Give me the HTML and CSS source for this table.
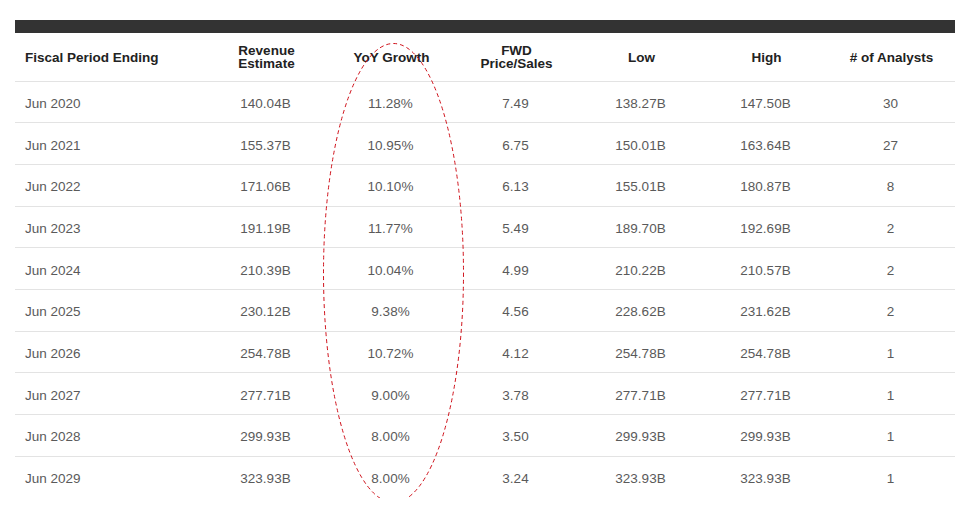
FILE: index.html
```html
<!DOCTYPE html>
<html>
<head>
<meta charset="utf-8">
<link rel="stylesheet" href="styles.css">
</head>
<body>
<div class="wrap">
  <div class="topbar"></div>
  <table class="est">
    <thead>
      <tr>
        <th class="first">Fiscal Period Ending</th>
        <th>Revenue<br>Estimate</th>
        <th>YoY Growth</th>
        <th>FWD<br>Price/Sales</th>
        <th>Low</th>
        <th>High</th>
        <th># of Analysts</th>
      </tr>
    </thead>
    <tbody>
      <tr><td class="first">Jun 2020</td><td>140.04B</td><td>11.28%</td><td>7.49</td><td>138.27B</td><td>147.50B</td><td>30</td></tr>
      <tr><td class="first">Jun 2021</td><td>155.37B</td><td>10.95%</td><td>6.75</td><td>150.01B</td><td>163.64B</td><td>27</td></tr>
      <tr><td class="first">Jun 2022</td><td>171.06B</td><td>10.10%</td><td>6.13</td><td>155.01B</td><td>180.87B</td><td>8</td></tr>
      <tr><td class="first">Jun 2023</td><td>191.19B</td><td>11.77%</td><td>5.49</td><td>189.70B</td><td>192.69B</td><td>2</td></tr>
      <tr><td class="first">Jun 2024</td><td>210.39B</td><td>10.04%</td><td>4.99</td><td>210.22B</td><td>210.57B</td><td>2</td></tr>
      <tr><td class="first">Jun 2025</td><td>230.12B</td><td>9.38%</td><td>4.56</td><td>228.62B</td><td>231.62B</td><td>2</td></tr>
      <tr><td class="first">Jun 2026</td><td>254.78B</td><td>10.72%</td><td>4.12</td><td>254.78B</td><td>254.78B</td><td>1</td></tr>
      <tr><td class="first">Jun 2027</td><td>277.71B</td><td>9.00%</td><td>3.78</td><td>277.71B</td><td>277.71B</td><td>1</td></tr>
      <tr><td class="first">Jun 2028</td><td>299.93B</td><td>8.00%</td><td>3.50</td><td>299.93B</td><td>299.93B</td><td>1</td></tr>
      <tr class="last"><td class="first">Jun 2029</td><td>323.93B</td><td>8.00%</td><td>3.24</td><td>323.93B</td><td>323.93B</td><td>1</td></tr>
    </tbody>
  </table>
  <svg class="oval" width="145" height="464" viewBox="0 0 145 464">
    <ellipse cx="72.5" cy="232" rx="70" ry="229.5" fill="none" stroke="#d0121b" stroke-width="1" stroke-dasharray="4 3"/>
  </svg>
</div>
</body>
</html>
```

FILE: styles.css
```css
html, body {
  margin: 0;
  padding: 0;
  background: #ffffff;
}
body {
  font-family: "Liberation Sans", Arial, sans-serif;
}
.wrap {
  position: relative;
  width: 940px;
  padding: 20px 20px 0 15px;
}
.topbar {
  height: 13px;
  background: #333333;
}
.est {
  width: 940px;
  border-collapse: collapse;
  table-layout: fixed;
}
.est th,
.est td {
  box-sizing: border-box;
}
.est th {
  height: 48px;
  padding: 1px 2px 0 0;
  font-size: 13.5px;
  line-height: 13.5px;
  font-weight: bold;
  color: #222222;
  text-align: center;
  border-bottom: 1px solid #e3e3e3;
  width: 125px;
}
.est th.first {
  width: 190px;
  text-align: left;
  padding-left: 10px;
}
.est td {
  height: 41.7px;
  padding: 3px 4px 0 0;
  font-size: 13.5px;
  color: #5a5a5a;
  text-align: center;
  border-bottom: 1px solid #e3e3e3;
}
.est td.first {
  text-align: left;
  padding-left: 10px;
}
.est tr.last td {
  border-bottom: none;
}
.oval {
  position: absolute;
  left: 321px;
  top: 41px;
}
```
